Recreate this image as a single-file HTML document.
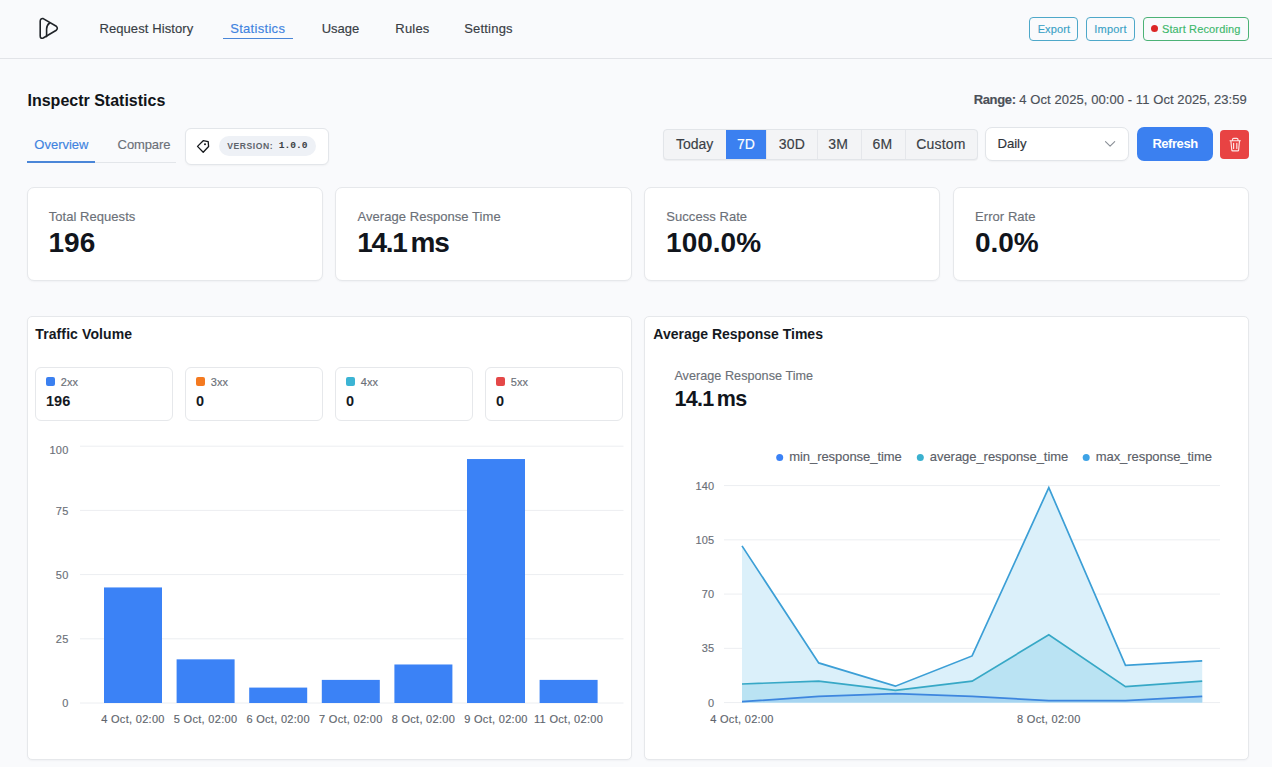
<!DOCTYPE html>
<html><head><meta charset="utf-8"><title>Inspectr Statistics</title>
<style>
html,body{margin:0;padding:0;}
body{width:1272px;height:767px;overflow:hidden;background:#f9fafc;font-family:"Liberation Sans", sans-serif;position:relative;}
.t{position:absolute;line-height:1;white-space:nowrap;-webkit-text-stroke:0.15px currentColor;}
.b{position:absolute;box-sizing:border-box;}
svg{position:absolute;left:0;top:0;}
</style></head><body>
<div class="b" style="left:0px;top:0px;width:1272px;height:58px;background:#f9fafc;"></div>
<div class="b" style="left:0px;top:58px;width:1272px;height:1px;background:#e2e4e8;"></div>
<svg width="1272" height="767" style="pointer-events:none">
<g fill="none" stroke="#1f2328" stroke-width="1.6" stroke-linejoin="round" stroke-linecap="round">
<path d="M40.2 21.2 Q40.2 18.2 43.2 18.6 L56.3 26.3 Q58.3 28.3 56.3 30.2 L43.2 38.0 Q40.2 39.0 40.2 36.0 Z"/>
<path d="M49.6 23.0 Q46.6 25.2 46.6 29.0 L46.6 36.6"/>
</g></svg>
<div class="t" style="left:99.40px;top:22.00px;font-size:13px;color:#383d44;letter-spacing:0.1px;">Request History</div>
<div class="t" style="left:230.20px;top:22.00px;font-size:13px;color:#3f83e0;letter-spacing:0.3px;">Statistics</div>
<div class="b" style="left:223px;top:37.6px;width:70px;height:1.6px;background:#4a86d8;"></div>
<div class="t" style="left:321.70px;top:22.00px;font-size:13px;color:#383d44;">Usage</div>
<div class="t" style="left:395.30px;top:22.00px;font-size:13px;color:#383d44;letter-spacing:0.2px;">Rules</div>
<div class="t" style="left:464.20px;top:22.00px;font-size:13px;color:#383d44;letter-spacing:0.2px;">Settings</div>
<div class="b" style="left:1029px;top:17px;width:49px;height:24px;border:1px solid #4ea8c9;border-radius:4px;"></div>
<div class="t" style="left:1037.70px;top:23.80px;font-size:11px;color:#3aa2c6;letter-spacing:0.1px;">Export</div>
<div class="b" style="left:1086px;top:17px;width:49px;height:24px;border:1px solid #4ea8c9;border-radius:4px;"></div>
<div class="t" style="left:1094.30px;top:23.80px;font-size:11px;color:#3aa2c6;letter-spacing:0.2px;">Import</div>
<div class="b" style="left:1143px;top:17px;width:106px;height:24px;border:1px solid #4cb276;border-radius:4px;"></div>
<div class="b" style="left:1150.8px;top:25px;width:7px;height:7px;background:#dc2626;border-radius:50%;"></div>
<div class="t" style="left:1161.90px;top:23.80px;font-size:11px;color:#3db86c;letter-spacing:0.15px;">Start Recording</div>
<div class="t" style="left:27.50px;top:92.50px;font-size:16px;color:#111418;font-weight:700;-webkit-text-stroke:0;">Inspectr Statistics</div>
<div class="t" style="left:973.70px;top:93.30px;font-size:13px;color:#4b5058;letter-spacing:0.08px;"><b style="letter-spacing:-0.35px">Range:</b> 4 Oct 2025, 00:00 - 11 Oct 2025, 23:59</div>
<div class="t" style="left:34.30px;top:138.10px;font-size:13px;color:#3f83e0;">Overview</div>
<div class="t" style="left:117.60px;top:138.10px;font-size:13px;color:#6b7078;letter-spacing:-0.1px;">Compare</div>
<div class="b" style="left:27px;top:162px;width:149px;height:1px;background:#e3e6ea;"></div>
<div class="b" style="left:27px;top:161.4px;width:68px;height:1.6px;background:#4a86d8;"></div>
<div class="b" style="left:185px;top:128px;width:144px;height:37px;background:#fff;border:1px solid #e3e6ea;border-radius:6px;box-shadow:0 1px 2px rgba(0,0,0,0.04);"></div>
<svg width="1272" height="767" style="pointer-events:none">
<g fill="none" stroke="#15181c" stroke-width="1.3" stroke-linejoin="round">
<path d="M203.2 140.7 L208.2 141.6 L208.6 146.5 L203.2 152.2 L197.5 146.4 Z"/>
</g><circle cx="205.0" cy="144.3" r="1.0" fill="#15181c"/></svg>
<div class="b" style="left:219px;top:136px;width:97px;height:20px;background:#eef1f6;border-radius:10px;"></div>
<div class="t" style="left:227.20px;top:141.60px;font-size:8.6px;color:#5d636b;font-weight:700;-webkit-text-stroke:0;letter-spacing:0.55px;">VERSION:</div>
<div class="t" style="left:278.80px;top:140.60px;font-size:9.6px;color:#3a3e44;font-weight:700;-webkit-text-stroke:0;font-family:'Liberation Mono', monospace;">1.0.0</div>
<div class="b" style="left:663px;top:129px;width:315px;height:31px;background:#f3f4f6;border:1px solid #e2e5e9;border-radius:4px;box-shadow:0 1px 1px rgba(0,0,0,0.05);overflow:hidden;"></div>
<div class="b" style="left:726px;top:130px;width:1px;height:29px;background:#e5e7eb;"></div>
<div class="b" style="left:766px;top:130px;width:1px;height:29px;background:#e5e7eb;"></div>
<div class="b" style="left:817px;top:130px;width:1px;height:29px;background:#e5e7eb;"></div>
<div class="b" style="left:861px;top:130px;width:1px;height:29px;background:#e5e7eb;"></div>
<div class="b" style="left:904.5px;top:130px;width:1px;height:29px;background:#e5e7eb;"></div>
<div class="b" style="left:726px;top:130px;width:40px;height:29px;background:#3b80f0;"></div>
<div class="t" style="left:675.90px;top:136.90px;font-size:14px;color:#3a3f46;">Today</div>
<div class="t" style="left:737.00px;top:136.90px;font-size:14px;color:#ffffff;">7D</div>
<div class="t" style="left:778.70px;top:136.90px;font-size:14px;color:#3a3f46;letter-spacing:0.2px;">30D</div>
<div class="t" style="left:828.30px;top:136.90px;font-size:14px;color:#3a3f46;letter-spacing:0.2px;">3M</div>
<div class="t" style="left:872.40px;top:136.90px;font-size:14px;color:#3a3f46;letter-spacing:0.2px;">6M</div>
<div class="t" style="left:916.20px;top:136.90px;font-size:14px;color:#3a3f46;letter-spacing:0.2px;">Custom</div>
<div class="b" style="left:985px;top:127px;width:144px;height:34px;background:#fff;border:1px solid #e2e5e9;border-radius:7px;box-shadow:0 1px 2px rgba(0,0,0,0.04);"></div>
<div class="t" style="left:997.60px;top:137.10px;font-size:13.2px;color:#2f343a;letter-spacing:-0.1px;">Daily</div>
<svg width="1272" height="767" style="pointer-events:none">
<path d="M1105.5 141.6 L1110.1 146.2 L1114.7 141.6" fill="none" stroke="#8a8f96" stroke-width="1.1" stroke-linecap="round" stroke-linejoin="round"/></svg>
<div class="b" style="left:1137px;top:127px;width:76px;height:34px;background:#3b80f0;border-radius:7px;"></div>
<div class="t" style="left:1152.40px;top:137.20px;font-size:13px;color:#ffffff;font-weight:700;-webkit-text-stroke:0;letter-spacing:-0.45px;">Refresh</div>
<div class="b" style="left:1220px;top:130px;width:29px;height:29px;background:#e84343;border-radius:4px;"></div>
<svg width="1272" height="767" style="pointer-events:none">
<g fill="none" stroke="#fde6e6" stroke-width="1.15" stroke-linecap="round" stroke-linejoin="round">
<path d="M1230.0 140.7 H1240.4"/>
<path d="M1232.5 140.5 V139.5 Q1232.5 138.3 1233.7 138.3 H1236.8 Q1238.0 138.3 1238.0 139.5 V140.5"/>
<path d="M1230.9 141.0 L1231.8 150.2 Q1231.9 150.9 1232.6 150.9 H1237.8 Q1238.5 150.9 1238.6 150.2 L1239.5 141.0"/>
<path d="M1233.6 143.2 V148.5 M1236.8 143.2 V148.5"/>
</g></svg>
<div class="b" style="left:26.5px;top:186.7px;width:296.3px;height:94px;background:#fff;border:1px solid #e6e8eb;border-radius:7px;box-shadow:0 1px 2px rgba(16,24,40,0.04);"></div>
<div class="t" style="left:48.70px;top:210.20px;font-size:13px;color:#6b7078;letter-spacing:0.05px;">Total Requests</div>
<div class="t" style="left:48.50px;top:228.50px;font-size:28px;color:#11151c;font-weight:700;-webkit-text-stroke:0;">196</div>
<div class="b" style="left:335.3px;top:186.7px;width:296.3px;height:94px;background:#fff;border:1px solid #e6e8eb;border-radius:7px;box-shadow:0 1px 2px rgba(16,24,40,0.04);"></div>
<div class="t" style="left:357.50px;top:210.20px;font-size:13px;color:#6b7078;letter-spacing:0.05px;">Average Response Time</div>
<div class="t" style="left:357.30px;top:228.50px;font-size:28px;color:#11151c;font-weight:700;-webkit-text-stroke:0;letter-spacing:-1.3px;word-spacing:-2.5px;">14.1 ms</div>
<div class="b" style="left:644.1px;top:186.7px;width:296.3px;height:94px;background:#fff;border:1px solid #e6e8eb;border-radius:7px;box-shadow:0 1px 2px rgba(16,24,40,0.04);"></div>
<div class="t" style="left:666.30px;top:210.20px;font-size:13px;color:#6b7078;letter-spacing:0.05px;">Success Rate</div>
<div class="t" style="left:666.10px;top:228.50px;font-size:28px;color:#11151c;font-weight:700;-webkit-text-stroke:0;">100.0%</div>
<div class="b" style="left:952.9px;top:186.7px;width:296.3px;height:94px;background:#fff;border:1px solid #e6e8eb;border-radius:7px;box-shadow:0 1px 2px rgba(16,24,40,0.04);"></div>
<div class="t" style="left:975.10px;top:210.20px;font-size:13px;color:#6b7078;letter-spacing:0.05px;">Error Rate</div>
<div class="t" style="left:974.90px;top:228.50px;font-size:28px;color:#11151c;font-weight:700;-webkit-text-stroke:0;">0.0%</div>
<div class="b" style="left:26.5px;top:315.5px;width:605.3px;height:444.3px;background:#fff;border:1px solid #e6e8eb;border-radius:5px;box-shadow:0 1px 2px rgba(16,24,40,0.04);"></div>
<div class="b" style="left:644.2px;top:315.5px;width:605.3px;height:444.3px;background:#fff;border:1px solid #e6e8eb;border-radius:5px;box-shadow:0 1px 2px rgba(16,24,40,0.04);"></div>
<div class="t" style="left:35.30px;top:326.90px;font-size:14px;color:#15191f;font-weight:700;-webkit-text-stroke:0;letter-spacing:0.1px;">Traffic Volume</div>
<div class="t" style="left:653.30px;top:326.70px;font-size:14px;color:#15191f;font-weight:700;-webkit-text-stroke:0;">Average Response Times</div>
<div class="b" style="left:35px;top:367px;width:138px;height:54px;background:#fff;border:1px solid #e6e8eb;border-radius:6px;"></div>
<div class="b" style="left:46px;top:377px;width:9px;height:9px;background:#3b80f0;border-radius:2px;"></div>
<div class="t" style="left:60.80px;top:376.50px;font-size:11px;color:#6b7078;letter-spacing:0.1px;">2xx</div>
<div class="t" style="left:46.00px;top:394.45px;font-size:14.5px;color:#15191f;font-weight:700;-webkit-text-stroke:0;">196</div>
<div class="b" style="left:185px;top:367px;width:138px;height:54px;background:#fff;border:1px solid #e6e8eb;border-radius:6px;"></div>
<div class="b" style="left:196px;top:377px;width:9px;height:9px;background:#f47a20;border-radius:2px;"></div>
<div class="t" style="left:210.80px;top:376.50px;font-size:11px;color:#6b7078;letter-spacing:0.1px;">3xx</div>
<div class="t" style="left:196.00px;top:394.45px;font-size:14.5px;color:#15191f;font-weight:700;-webkit-text-stroke:0;">0</div>
<div class="b" style="left:335px;top:367px;width:138px;height:54px;background:#fff;border:1px solid #e6e8eb;border-radius:6px;"></div>
<div class="b" style="left:346px;top:377px;width:9px;height:9px;background:#3cb4d4;border-radius:2px;"></div>
<div class="t" style="left:360.80px;top:376.50px;font-size:11px;color:#6b7078;letter-spacing:0.1px;">4xx</div>
<div class="t" style="left:346.00px;top:394.45px;font-size:14.5px;color:#15191f;font-weight:700;-webkit-text-stroke:0;">0</div>
<div class="b" style="left:485px;top:367px;width:138px;height:54px;background:#fff;border:1px solid #e6e8eb;border-radius:6px;"></div>
<div class="b" style="left:496px;top:377px;width:9px;height:9px;background:#e44848;border-radius:2px;"></div>
<div class="t" style="left:510.80px;top:376.50px;font-size:11px;color:#6b7078;letter-spacing:0.1px;">5xx</div>
<div class="t" style="left:496.00px;top:394.45px;font-size:14.5px;color:#15191f;font-weight:700;-webkit-text-stroke:0;">0</div>
<svg width="1272" height="767" style="pointer-events:none">
<line x1="80" y1="446.2" x2="623.5" y2="446.2" stroke="#eceef1" stroke-width="1"/>
<line x1="80" y1="510.4" x2="623.5" y2="510.4" stroke="#eceef1" stroke-width="1"/>
<line x1="80" y1="574.6" x2="623.5" y2="574.6" stroke="#eceef1" stroke-width="1"/>
<line x1="80" y1="638.8" x2="623.5" y2="638.8" stroke="#eceef1" stroke-width="1"/>
<line x1="80" y1="703.0" x2="623.5" y2="703.0" stroke="#eceef1" stroke-width="1"/>
<rect x="104.00" y="587.44" width="58" height="115.56" fill="#3b82f6"/>
<rect x="176.60" y="659.34" width="58" height="43.66" fill="#3b82f6"/>
<rect x="249.20" y="687.59" width="58" height="15.41" fill="#3b82f6"/>
<rect x="321.80" y="679.89" width="58" height="23.11" fill="#3b82f6"/>
<rect x="394.40" y="664.48" width="58" height="38.52" fill="#3b82f6"/>
<rect x="467.00" y="459.04" width="58" height="243.96" fill="#3b82f6"/>
<rect x="539.60" y="679.89" width="58" height="23.11" fill="#3b82f6"/>
</svg>
<div class="t" style="left:-231.50px;width:300px;text-align:right;top:444.70px;font-size:11px;color:#6b7078;letter-spacing:0.2px;">100</div>
<div class="t" style="left:-231.50px;width:300px;text-align:right;top:505.50px;font-size:11px;color:#6b7078;letter-spacing:0.2px;">75</div>
<div class="t" style="left:-231.50px;width:300px;text-align:right;top:569.70px;font-size:11px;color:#6b7078;letter-spacing:0.2px;">50</div>
<div class="t" style="left:-231.50px;width:300px;text-align:right;top:633.90px;font-size:11px;color:#6b7078;letter-spacing:0.2px;">25</div>
<div class="t" style="left:-231.50px;width:300px;text-align:right;top:698.10px;font-size:11px;color:#6b7078;letter-spacing:0.2px;">0</div>
<div class="t" style="left:-17.00px;width:300px;text-align:center;top:713.50px;font-size:11px;color:#60656d;letter-spacing:0.3px;">4 Oct, 02:00</div>
<div class="t" style="left:55.60px;width:300px;text-align:center;top:713.50px;font-size:11px;color:#60656d;letter-spacing:0.3px;">5 Oct, 02:00</div>
<div class="t" style="left:128.20px;width:300px;text-align:center;top:713.50px;font-size:11px;color:#60656d;letter-spacing:0.3px;">6 Oct, 02:00</div>
<div class="t" style="left:200.80px;width:300px;text-align:center;top:713.50px;font-size:11px;color:#60656d;letter-spacing:0.3px;">7 Oct, 02:00</div>
<div class="t" style="left:273.40px;width:300px;text-align:center;top:713.50px;font-size:11px;color:#60656d;letter-spacing:0.3px;">8 Oct, 02:00</div>
<div class="t" style="left:346.00px;width:300px;text-align:center;top:713.50px;font-size:11px;color:#60656d;letter-spacing:0.3px;">9 Oct, 02:00</div>
<div class="t" style="left:418.60px;width:300px;text-align:center;top:713.50px;font-size:11px;color:#60656d;letter-spacing:0.3px;">11 Oct, 02:00</div>
<div class="t" style="left:674.40px;top:369.60px;font-size:12.6px;color:#6b7078;letter-spacing:0.05px;">Average Response Time</div>
<div class="t" style="left:674.40px;top:389.25px;font-size:21.5px;color:#11151c;font-weight:700;-webkit-text-stroke:0;letter-spacing:-0.7px;word-spacing:-2px;">14.1 ms</div>
<svg width="1272" height="767" style="pointer-events:none">
<circle cx="779.7" cy="457.5" r="3.5" fill="#3b82f6"/>
<circle cx="920.3" cy="457.5" r="3.5" fill="#3bb1cf"/>
<circle cx="1086.2" cy="457.5" r="3.5" fill="#3ea3e6"/>
<line x1="724" y1="485.6" x2="1220" y2="485.6" stroke="#eceef1" stroke-width="1"/>
<line x1="724" y1="539.85" x2="1220" y2="539.85" stroke="#eceef1" stroke-width="1"/>
<line x1="724" y1="594.1" x2="1220" y2="594.1" stroke="#eceef1" stroke-width="1"/>
<line x1="724" y1="648.35" x2="1220" y2="648.35" stroke="#eceef1" stroke-width="1"/>
<line x1="724" y1="702.6" x2="1220" y2="702.6" stroke="#eceef1" stroke-width="1"/>
<polygon points="742.00,702.6 742.00,545.89 818.70,662.92 895.40,686.17 972.10,655.95 1048.80,487.62 1125.50,665.40 1202.20,660.90 1202.20,702.6" fill="#dbf0fa"/>
<polygon points="742.00,702.6 742.00,684.00 818.70,681.06 895.40,690.36 972.10,681.21 1048.80,634.71 1125.50,686.63 1202.20,681.21 1202.20,702.6" fill="#bae3f3"/>
<polygon points="742.00,702.6 742.00,701.67 818.70,696.40 895.40,693.61 972.10,696.40 1048.80,700.59 1125.50,700.59 1202.20,696.40 1202.20,702.6" fill="#a6d5f1"/>
<polyline points="742.00,545.89 818.70,662.92 895.40,686.17 972.10,655.95 1048.80,487.62 1125.50,665.40 1202.20,660.90" fill="none" stroke="#3c9fd6" stroke-width="1.7" stroke-linejoin="miter"/>
<polyline points="742.00,684.00 818.70,681.06 895.40,690.36 972.10,681.21 1048.80,634.71 1125.50,686.63 1202.20,681.21" fill="none" stroke="#37a8c6" stroke-width="1.7" stroke-linejoin="miter"/>
<polyline points="742.00,701.67 818.70,696.40 895.40,693.61 972.10,696.40 1048.80,700.59 1125.50,700.59 1202.20,696.40" fill="none" stroke="#3d86de" stroke-width="1.7" stroke-linejoin="miter"/>
</svg>
<div class="t" style="left:789.20px;top:450.40px;font-size:13px;color:#5b6068;letter-spacing:-0.05px;">min_response_time</div>
<div class="t" style="left:929.80px;top:450.40px;font-size:13px;color:#5b6068;letter-spacing:-0.05px;">average_response_time</div>
<div class="t" style="left:1095.70px;top:450.40px;font-size:13px;color:#5b6068;letter-spacing:-0.05px;">max_response_time</div>
<div class="t" style="left:414.40px;width:300px;text-align:right;top:480.70px;font-size:11px;color:#6b7078;letter-spacing:0.2px;">140</div>
<div class="t" style="left:414.40px;width:300px;text-align:right;top:534.95px;font-size:11px;color:#6b7078;letter-spacing:0.2px;">105</div>
<div class="t" style="left:414.40px;width:300px;text-align:right;top:589.20px;font-size:11px;color:#6b7078;letter-spacing:0.2px;">70</div>
<div class="t" style="left:414.40px;width:300px;text-align:right;top:643.45px;font-size:11px;color:#6b7078;letter-spacing:0.2px;">35</div>
<div class="t" style="left:414.40px;width:300px;text-align:right;top:697.70px;font-size:11px;color:#6b7078;letter-spacing:0.2px;">0</div>
<div class="t" style="left:592.00px;width:300px;text-align:center;top:713.50px;font-size:11px;color:#60656d;letter-spacing:0.3px;">4 Oct, 02:00</div>
<div class="t" style="left:898.80px;width:300px;text-align:center;top:713.50px;font-size:11px;color:#60656d;letter-spacing:0.3px;">8 Oct, 02:00</div>
</body></html>
